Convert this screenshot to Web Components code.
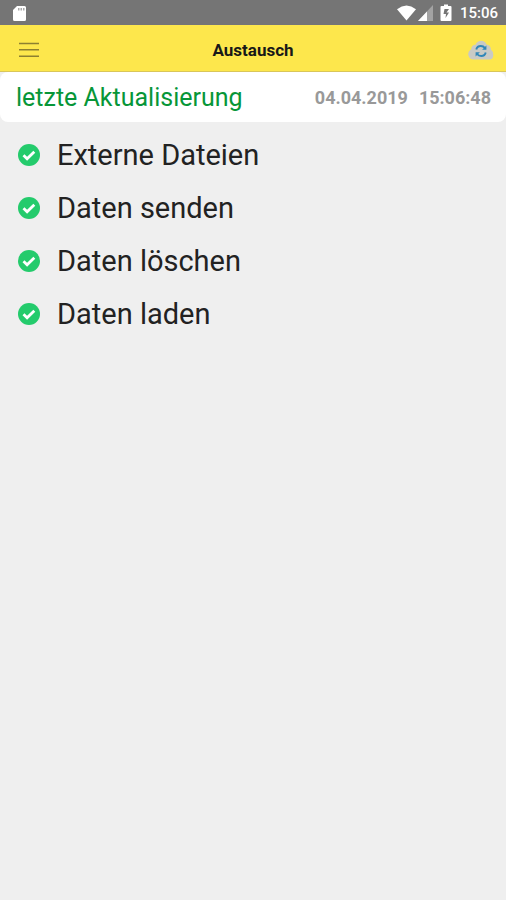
<!DOCTYPE html>
<html lang="de">
<head>
<meta charset="utf-8">
<meta name="viewport" content="width=device-width, initial-scale=1">
<title>Austausch</title>
<style>
html, body { margin: 0; min-height: 100%; background: #efefef; }
body { font-family: Roboto, "Liberation Sans", sans-serif; color: #222; }
</style>
</head>
<body>
<exchange-page>
  <status-bar time="15:06"></status-bar>
  <app-header>Austausch</app-header>
  <update-panel>
    <span slot="label">letzte Aktualisierung</span>
    <span slot="date">04.04.2019</span>
    <span slot="time">15:06:48</span>
  </update-panel>
  <step-list>
    <step-item>Externe Dateien</step-item>
    <step-item>Daten senden</step-item>
    <step-item>Daten löschen</step-item>
    <step-item>Daten laden</step-item>
  </step-list>
</exchange-page>
<script>
const define = (name, html, setup) => {
  const template = document.createElement('template');
  template.innerHTML = html;
  customElements.define(name, class extends HTMLElement {
    constructor() {
      super();
      this.attachShadow({ mode: 'open' }).append(template.content.cloneNode(true));
    }
    connectedCallback() { if (setup) setup(this); }
  });
};

define('exchange-page', `
<style>:host { display: flex; flex-direction: column; min-height: 100vh; background: #efefef; }</style>
<slot></slot>`);

define('status-bar', `
<style>
:host { display: flex; align-items: center; justify-content: space-between; box-sizing: border-box; min-height: 25px; padding: 1px 8px 0 12px; background: #757575; color: #fff; }
.right { display: flex; align-items: center; }
svg { display: block; fill: #fff; }
.signal { margin-left: 2px; }
.battery { margin-left: 7px; }
time { margin-left: 8px; font-size: 15px; line-height: 24px; font-weight: 500; }
</style>
<svg width="15" height="17" viewBox="0 0 15 17" aria-hidden="true"><path d="M5 1h7.500a1.500 1.500 0 0 1 1.500 1.500v12a1.500 1.500 0 0 1-1.500 1.500H2.500a1.500 1.500 0 0 1-1.500-1.500V5z"/><path d="M6 3h1.500v2.500H6zM8.500 3H10v2.500H8.500zM11 3h1.500v2.500H11z" fill="#aaa"/></svg>
<div class="right">
<svg width="19" height="16" viewBox="0 0 19 16" aria-hidden="true"><path d="M9.500 15.500L0 4.200Q9.500-3 19 4.200z"/></svg>
<svg class="signal" width="15" height="16" viewBox="0 0 15 16" aria-hidden="true"><path d="M15 0v16H0z" fill="#a3a3a3"/><path d="M9 6.400V16H0z"/></svg>
<svg class="battery" width="12" height="18" viewBox="0 0 12 18" aria-hidden="true"><path d="M1.500 2H4V.5h4V2h2.500q1 0 1 1v13q0 1-1 1h-9q-1 0-1-1V3q0-1 1-1z"/><path d="M4.500 5h4.500L6.500 8.500h2.500L5.500 14l.5-4H3.500z" fill="#757575"/></svg>
<time></time>
</div>`, host => { host.shadowRoot.querySelector('time').textContent = host.getAttribute('time'); });

define('app-header', `
<style>
:host { display: grid; grid-template-columns: 1fr auto 1fr; align-items: center; box-sizing: border-box; min-height: 47px; padding: 3px 12px 0; background: #fde74c; border-bottom: 1px solid #d9c65a; color: #181818; }
h1 { margin: 0; font-size: 17px; line-height: 24px; font-weight: 700; }
button { display: block; padding: 0; border: 0; background: none; }
.menu { justify-self: start; padding-left: 7px; }
.sync { justify-self: end; }
svg { display: block; }
</style>
<button class="menu" aria-label="Menü"><svg width="20" height="16" viewBox="0 0 20 16" fill="none" stroke="#8d8030" stroke-width="1.400"><path d="M0 1.500h20M0 7.700h20M0 14.300h20"/></svg></button>
<h1><slot></slot></h1>
<button class="sync" aria-label="Synchronisieren"><svg width="26" height="20" viewBox="0 0 26 20"><path d="M6 19.500a5.400 5.400 0 0 1-2.800-10.200Q3.500 5 7.500 4.800C9.500-.2 16.500-.8 18.500 4.500Q22.700 5 22.900 9.500Q25.500 11.500 25.300 15.500Q25 19.500 21.500 19.500z" fill="#c9cac5"/><g fill="none" stroke="#2f86b8" stroke-width="1.900"><path d="M8.300 9.500Q9 6 12.800 6q2.600 0 4.200 2M17.700 12.500Q17 16 13.200 16q-2.600 0-4.200-2"/></g><path d="M18.400 5.500v4.300h-4.300zM7.600 16.500v-4.300h4.300z" fill="#2f86b8"/></svg></button>`);

define('update-panel', `
<style>
:host { display: flex; align-items: center; justify-content: space-between; box-sizing: border-box; min-height: 50px; padding: 2px 15px 0 16px; background: #fff; border-radius: 8px; }
.label { font-size: 25px; line-height: 32px; color: #079638; }
.stamp { display: flex; gap: 11px; font-size: 18px; line-height: 24px; font-weight: 700; color: #999; }
</style>
<div class="label"><slot name="label"></slot></div>
<div class="stamp"><slot name="date"></slot><slot name="time"></slot></div>`);

define('step-list', `
<style>:host { display: flex; flex-direction: column; gap: 17px; padding: 15px 18px; }</style>
<div role="list" style="display:contents"><slot></slot></div>`);

define('step-item', `
<style>
:host { display: flex; align-items: center; gap: 17px; font-size: 29px; line-height: 36px; color: #222; }
svg { display: block; flex: none; }
</style>
<svg width="22" height="22" viewBox="0 0 22 22" role="img" aria-label="Erledigt"><circle cx="11" cy="11" r="11" fill="#24cb6c"/><path d="M5.500 11.200l3.600 3.500 7.200-7" fill="none" stroke="#fff" stroke-width="2.800"/></svg>
<slot></slot>`, host => host.setAttribute('role', 'listitem'));
</script>
</body>
</html>
